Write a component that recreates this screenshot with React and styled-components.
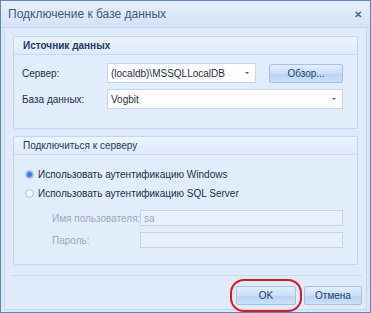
import React from "react";
import styled, { createGlobalStyle } from "styled-components";

const Global = createGlobalStyle`
  html, body {
    margin: 0;
    padding: 0;
    background: #fff;
  }
  * { box-sizing: border-box; }
`;

const Window = styled.div`
  width: 371px;
  height: 313px;
  display: flex;
  flex-direction: column;
  border: 1px solid #5d86bf;
  background: #dbe7f7;
  font-family: "Liberation Sans", Arial, sans-serif;
  font-size: 10px;
  color: #1d2d44;
`;

const TitleBar = styled.div`
  height: 27px;
  display: flex;
  align-items: center;
  justify-content: space-between;
  padding: 0 8px 0 7px;
  background: linear-gradient(#e6effb, #d4e2f5);
  border-bottom: 1px solid #c2d5ee;
  color: #3c5a84;
  font-size: 12px;
`;

const Close = styled.span`
  color: #3f66a0;
  font-weight: bold;
  font-size: 10px;
`;

const Body = styled.div`
  flex: 1;
  display: flex;
  flex-direction: column;
  margin: 0 3px 2px 3px;
  border-left: 1px solid #c6d8ef;
  border-right: 1px solid #c6d8ef;
  border-bottom: 1px solid #c6d8ef;
  background: #dfeafa;
  padding: 8px 8px 0 8px;
  gap: 7px;
`;

const Group = styled.div`
  border: 1px solid #c3d6ef;
  border-radius: 2px;
  background: #e2edfc;
  display: flex;
  flex-direction: column;
  flex-shrink: 0;
  height: ${(p) => p.h}px;
`;

const GroupHeader = styled.div`
  height: 18px;
  display: flex;
  align-items: center;
  padding-left: 9px;
  background: linear-gradient(#ebf3fd, #dfeafa);
  border-bottom: 1px solid #c7d9f0;
  color: #1f3a60;
  font-weight: ${(p) => (p.bold ? "bold" : "normal")};
`;

const GroupContent = styled.div`
  display: flex;
  flex-direction: column;
  padding: ${(p) => p.pad};
  gap: ${(p) => p.gap}px;
`;

const Row = styled.div`
  display: flex;
  align-items: center;
  height: ${(p) => p.h || 20}px;
  padding-left: ${(p) => p.indent || 0}px;
  margin-top: ${(p) => p.top || 0}px;
`;

const Label = styled.span`
  width: ${(p) => p.w}px;
  flex-shrink: 0;
  white-space: nowrap;
  color: ${(p) => (p.disabled ? "#9ba8b9" : "#1d2d44")};
`;

const Combo = styled.div`
  width: ${(p) => p.w}px;
  height: 20px;
  background: #fff;
  border: 1px solid #c5d6ec;
  display: flex;
  align-items: center;
  justify-content: space-between;
  padding: 0 6px 0 3px;
`;

const Arrow = styled.span`
  width: 0;
  height: 0;
  border-left: 2px solid transparent;
  border-right: 2px solid transparent;
  border-top: 2px solid #4a5a70;
`;

const Input = styled.div`
  width: ${(p) => p.w}px;
  height: 16px;
  background: #e7f0fc;
  border: 1px solid #c3d3e8;
  color: #9ba8b9;
  padding-left: 3px;
  display: flex;
  align-items: center;
`;

const Button = styled.div`
  width: ${(p) => p.w}px;
  height: 19px;
  flex-shrink: 0;
  margin-left: ${(p) => p.left || 0}px;
  display: flex;
  align-items: center;
  justify-content: center;
  border: 1px solid #a6c0e3;
  border-radius: 2px;
  background: linear-gradient(#e2eefc 0%, #cadff7 50%, #b8d2f1 51%, #cde1f7 100%);
  color: #22406a;
  position: relative;
`;

const Ring = styled.div`
  position: absolute;
  left: -7px;
  top: -8px;
  right: -7px;
  bottom: -8px;
  border: 2px solid #e3161c;
  border-radius: 14px;
`;

const Radio = styled.span`
  width: 9px;
  height: 9px;
  border-radius: 50%;
  flex-shrink: 0;
  margin-right: 4px;
  border: 1px solid ${(p) => (p.checked ? "#9dbde8" : "#b3c5dc")};
  background: ${(p) =>
    p.checked
      ? "radial-gradient(circle, #3f7bd3 0 2px, #8db4ea 3px, #dbe8f9 4px)"
      : "radial-gradient(circle, #f3f7fd 0 2px, #dbe5f2 4px)"};
`;

const RadioRow = styled.div`
  display: flex;
  align-items: center;
  height: 14px;
  padding-left: 11px;
`;

const Footer = styled.div`
  flex: 1;
  margin: 3px -4px 0 -1px;
  border-top: 1px solid #c8daf1;
  display: flex;
  align-items: flex-start;
  justify-content: flex-end;
  gap: 8px;
  padding-top: 10px;
`;

export default function App() {
  return (
    <>
      <Global />
      <Window>
        <TitleBar>
          <span>Подключение к базе данных</span>
          <Close>✕</Close>
        </TitleBar>
        <Body>
          <Group h={93}>
            <GroupHeader bold>Источник данных</GroupHeader>
            <GroupContent pad="8px 0 0 8px" gap={6}>
              <Row>
                <Label w={85}>Сервер:</Label>
                <Combo w={149}>
                  <span>(localdb)\MSSQLLocalDB</span>
                  <Arrow />
                </Combo>
                <Button w={74} left={13}>Обзор...</Button>
              </Row>
              <Row>
                <Label w={85}>База данных:</Label>
                <Combo w={236}>
                  <span>Vogbit</span>
                  <Arrow />
                </Combo>
              </Row>
            </GroupContent>
          </Group>
          <Group h={129}>
            <GroupHeader>Подключиться к серверу</GroupHeader>
            <GroupContent pad="12px 0 0 0" gap={5}>
              <RadioRow>
                <Radio checked />
                Использовать аутентификацию Windows
              </RadioRow>
              <RadioRow>
                <Radio />
                Использовать аутентификацию SQL Server
              </RadioRow>
              <Row h={16} indent={38} top={5}>
                <Label w={88} disabled>Имя пользователя:</Label>
                <Input w={203}>sa</Input>
              </Row>
              <Row h={16} indent={38} top={1}>
                <Label w={88} disabled>Пароль:</Label>
                <Input w={203} />
              </Row>
            </GroupContent>
          </Group>
          <Footer>
            <Button w={60}>
              OK
              <Ring />
            </Button>
            <Button w={58}>Отмена</Button>
          </Footer>
        </Body>
      </Window>
    </>
  );
}
